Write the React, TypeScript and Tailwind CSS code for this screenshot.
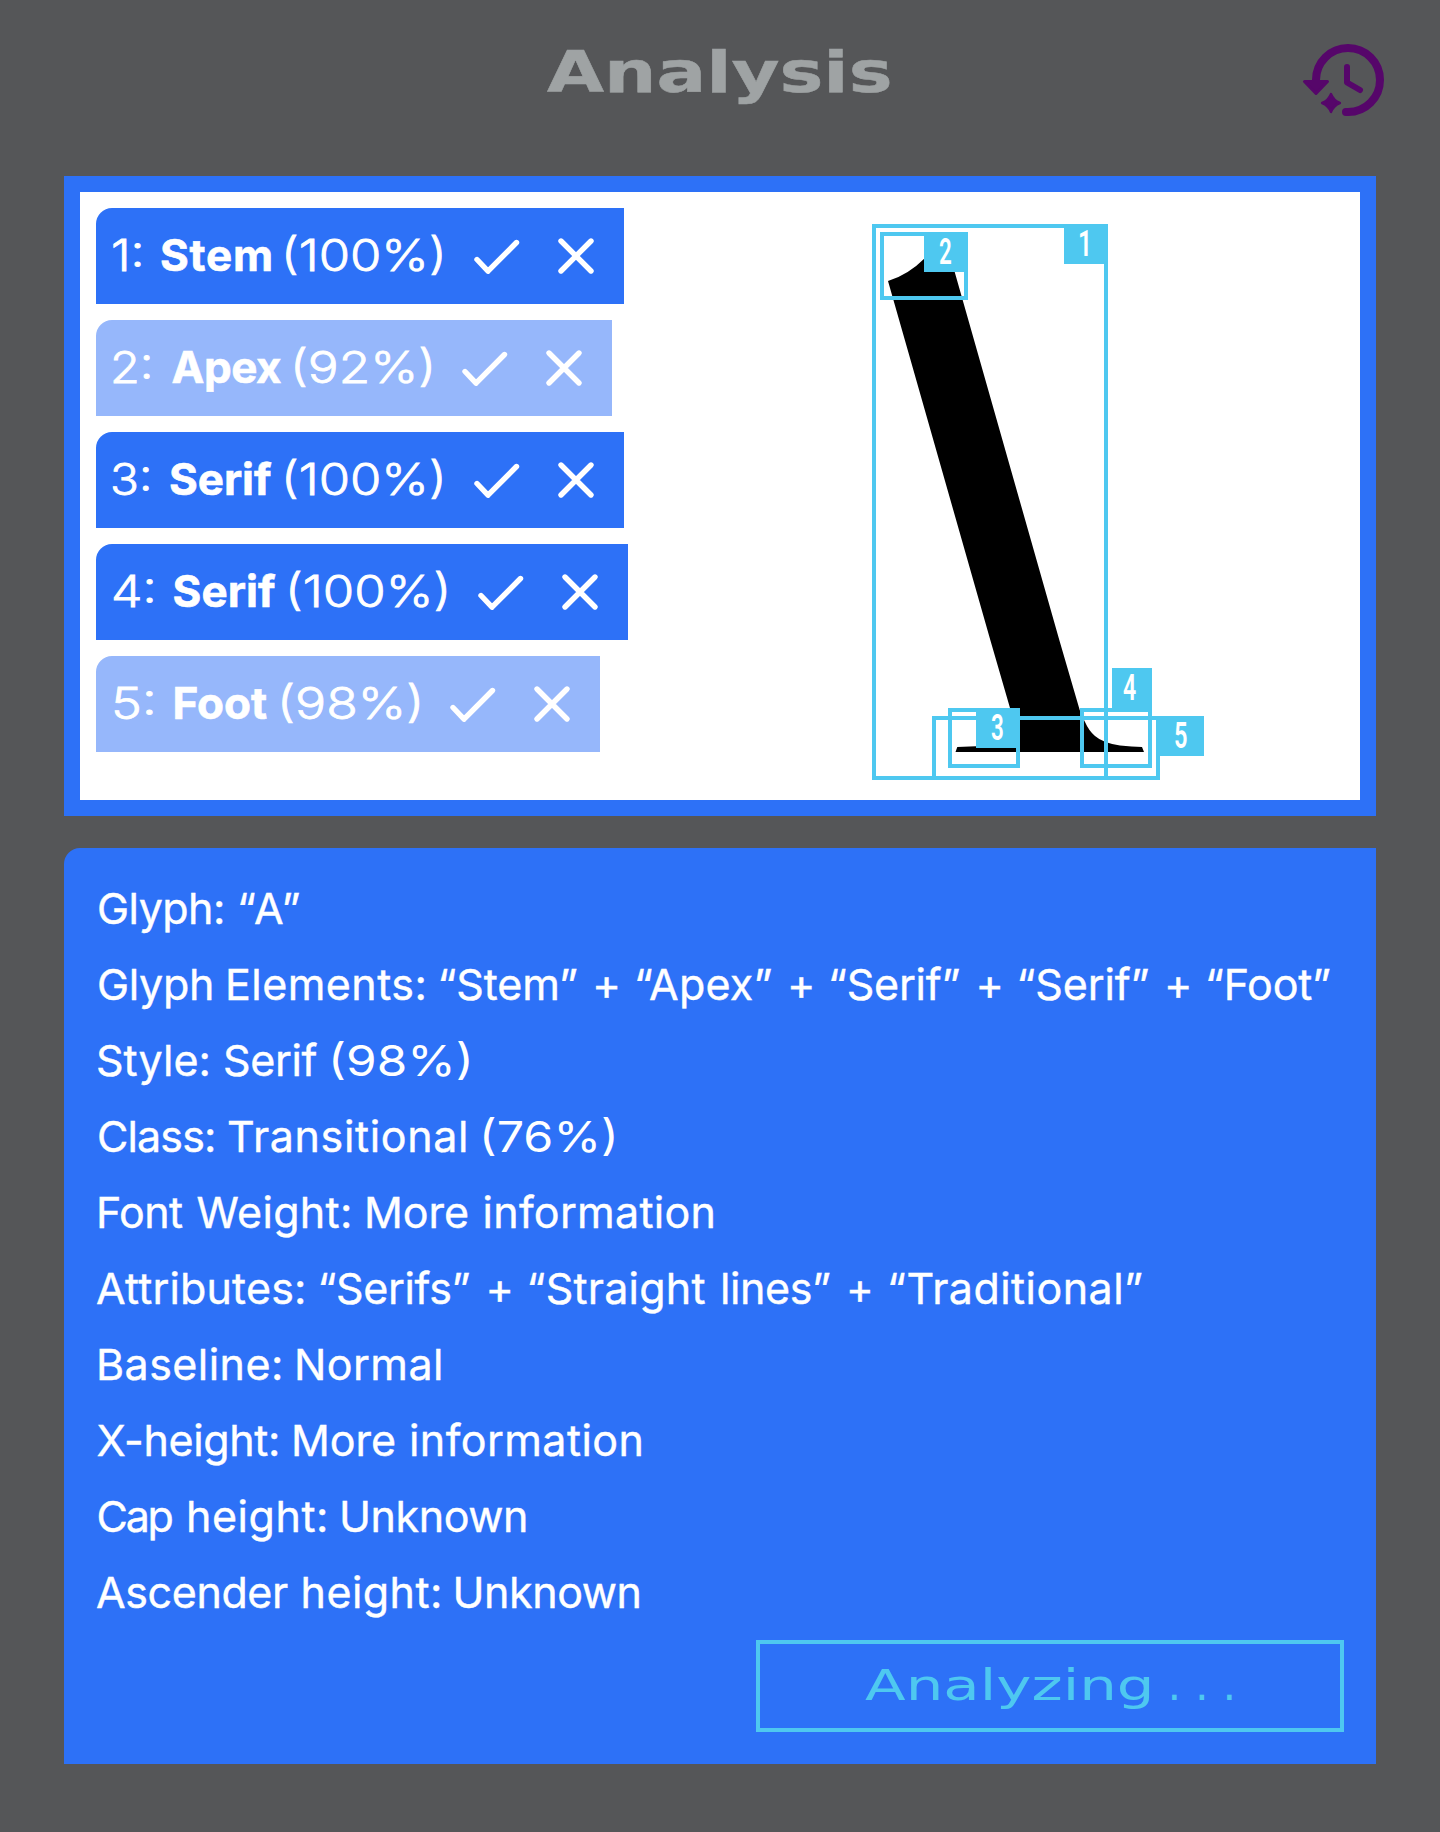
import { useLayoutEffect, useRef } from "react";

type Face = { family: string; weight: number; size: number };
type Word = [text: string, from: number, to: number];

const BODY: Face = { family: "Inter", weight: 400, size: 43 };
const LIGHT: Face = { family: "Inter", weight: 300, size: 44 };
const BOLD: Face = { family: "Inter", weight: 700, size: 44 };
const TAG: Face = { family: "Roboto", weight: 600, size: 37 };
const TITLE: Face = { family: "DejaVu Sans", weight: 700, size: 57 };
const WIDE: Face = { family: "DejaVu Sans", weight: 400, size: 43 };

/* A word whose inked width is fitted to `width`, by tracking or by stretching. */
function Fit({ text, width, face, gap = 0, stretch = false, className = "" }: { text: string; width: number; face: Face; gap?: number; stretch?: boolean; className?: string }) {
  const ref = useRef<HTMLSpanElement>(null);
  useLayoutEffect(() => {
    const el = ref.current;
    const ctx = document.createElement("canvas").getContext("2d");
    if (!el || !ctx) return;
    ctx.font = `${face.weight} ${face.size}px "${face.family}"`;
    const m = ctx.measureText(text);
    const ink = m.actualBoundingBoxLeft + m.actualBoundingBoxRight;
    if (stretch) {
      const s = width / ink;
      el.style.transform = `scaleX(${s})`;
      el.style.marginLeft = `${m.actualBoundingBoxLeft * s}px`;
    } else {
      el.style.letterSpacing = `${(width - ink) / Math.max(1, text.length - 1)}px`;
      el.style.marginLeft = `${m.actualBoundingBoxLeft}px`;
    }
  }, [text, width, face, stretch]);
  return (
    <span className={`block shrink-0 whitespace-nowrap text-left ${className}`} style={{ width, marginLeft: gap }}>
      <span
        ref={ref}
        className="inline-block origin-left"
        style={{ fontFamily: `"${face.family}", sans-serif`, fontWeight: face.weight, fontSize: face.size }}
      >
        {text}
      </span>
    </span>
  );
}

const lines: Word[][] = [
  [["Glyph:", 99, 223], ["“A”", 240, 299.5]],
  [["Glyph", 99, 212], ["Elements:", 228, 424.5], ["“Stem”", 440.5, 577], ["+", 596.5, 618], ["“Apex”", 637, 771.5], ["+", 791, 812], ["“Serif”", 831, 959.5], ["+", 979.5, 1000.5], ["“Serif”", 1019.5, 1148.5], ["+", 1168, 1189], ["“Foot”", 1208, 1330]],
  [["Style:", 98, 208.5], ["Serif", 225, 317.5], ["(98%)", 333, 470]],
  [["Class:", 99, 214], ["Transitional", 229, 466], ["(76%)", 483, 614]],
  [["Font", 99, 183], ["Weight:", 197.5, 350], ["More", 367, 467], ["information", 484.5, 713.5]],
  [["Attributes:", 97, 304], ["“Serifs”", 320.5, 469.5], ["+", 489.5, 510.5], ["“Straight", 529.5, 705.5], ["lines”", 723, 830], ["+", 850, 870.5], ["“Traditional”", 890, 1142]],
  [["Baseline:", 99, 281], ["Normal", 297, 441]],
  [["X-height:", 97.5, 278], ["More", 294, 394], ["information", 411, 641.5]],
  [["Cap", 98.5, 172.5], ["height:", 189, 326], ["Unknown", 342, 526]],
  [["Ascender", 97, 288], ["height:", 303.5, 440], ["Unknown", 455.5, 639.5]],
];

const rows = [
  { n: ["1:", 113.5, 141], name: ["Stem", 161, 271], pct: ["(100%)", 286, 442], right: 624, solid: true },
  { n: ["2:", 113.5, 150], name: ["Apex", 172.5, 281], pct: ["(92%)", 295, 431.5], right: 612, solid: false },
  { n: ["3:", 112.5, 149], name: ["Serif", 170, 272], pct: ["(100%)", 286, 442], right: 624, solid: true },
  { n: ["4:", 113.5, 153], name: ["Serif", 173.5, 276], pct: ["(100%)", 289.5, 446], right: 628, solid: true },
  { n: ["5:", 115, 153], name: ["Foot", 174.5, 267], pct: ["(98%)", 282, 419.5], right: 600, solid: false },
] as { n: Word; name: Word; pct: Word; right: number; solid: boolean }[];

function TextLine({ words }: { words: Word[] }) {
  return (
    <div className="flex h-[76px] items-baseline leading-[76px]">
      {words.map(([t, a, b], i) => {
        const figures = t.includes("%");
        return (
          <Fit
            key={i}
            text={t}
            width={b - a}
            face={BODY}
            gap={a - (i ? words[i - 1][2] : 96)}
            stretch={figures || t === "+"}
            className={figures ? "" : "[-webkit-text-stroke:0.4px]"}
          />
        );
      })}
    </div>
  );
}

function ElementRow({ row }: { row: (typeof rows)[number] }) {
  const { n, name, pct, right, solid } = row;
  return (
    <div
      className={`flex h-24 items-baseline rounded-tl-2xl leading-[94px] text-white ${solid ? "bg-[#2d71f7]" : "bg-[#96b7fb]"}`}
      style={{ width: right - 96 }}
    >
      <Fit text={n[0]} width={n[2] - n[1]} face={LIGHT} gap={n[1] - 96} stretch className="[-webkit-text-stroke:0.8px]" />
      <Fit text={name[0]} width={name[2] - name[1]} face={BOLD} gap={name[1] - n[2]} className="[-webkit-text-stroke:0.6px]" />
      <Fit text={pct[0]} width={pct[2] - pct[1]} face={LIGHT} gap={pct[1] - name[2]} stretch className="[-webkit-text-stroke:0.8px]" />
      <svg className="ml-auto mr-7 h-24 w-[124px] shrink-0 self-start" viewBox="0 0 124 96" fill="none" stroke="white" strokeWidth="5.4" strokeLinecap="round" strokeLinejoin="round">
        <path d="M5 51.5L16 63.2L44.5 34.5" />
        <path d="M89 33L119 63M119 33L89 63" />
      </svg>
    </div>
  );
}

function Tag({ text, width, className }: { text: string; width: number; className: string }) {
  return (
    <div className={`absolute flex h-10 items-baseline justify-center bg-[#4ec8f0] leading-[40px] text-white ${className}`}>
      <Fit text={text} width={width} face={TAG} stretch />
    </div>
  );
}

function GlyphCanvas() {
  return (
    <div className="relative h-[556px] w-[332px]">
      <svg className="absolute inset-0" width="332" height="556" viewBox="872 224 332 556">
        <path d="M888 281Q908 275 925 258L941 236L945 237L954.7 272L1059.3 640L1079.7 710Q1082 717 1085 722Q1089 731 1095 736Q1103 743 1120 745.5Q1132 746.6 1142 747L1144 752H955.5L957.3 747L976 746.2Q1008 744 1013 733Q1015 726 1010 708L990.3 640L907.7 350Z" fill="black" />
      </svg>
      <div className="absolute left-0 top-0 h-[556px] w-[236px] border-4 border-[#4ec8f0]" />
      <div className="absolute left-2 top-2 h-[68px] w-[88px] border-4 border-[#4ec8f0]" />
      <div className="absolute left-[76px] top-[484px] h-[60px] w-[72px] border-4 border-[#4ec8f0]" />
      <div className="absolute left-[208px] top-[484px] h-[60px] w-[72px] border-4 border-[#4ec8f0]" />
      <div className="absolute left-[60px] top-[492px] h-[64px] w-[228px] border-4 border-[#4ec8f0]" />
      <Tag text="1" width={8} className="left-48 top-0 w-11 pr-1" />
      <Tag text="2" width={11.5} className="left-[52px] top-2 w-11 pr-px" />
      <Tag text="3" width={11.5} className="left-[104px] top-[484px] w-11 pr-px" />
      <Tag text="4" width={12.5} className="left-60 top-[444px] w-10 pr-[5px]" />
      <Tag text="5" width={11.5} className="left-[284px] top-[492px] w-12 pl-[3px]" />
    </div>
  );
}

function HistoryIcon() {
  return (
    <svg className="h-[84px] w-[84px]" viewBox="1300 40 84 84" fill="none" stroke="#56066a" strokeLinecap="round" strokeLinejoin="round">
      <path d="M1316 84V80A32 32 0 1 1 1348 112H1346" strokeWidth="8" />
      <path d="M1304.5 81.5H1327.5L1316 93.5Z" fill="#56066a" strokeWidth="3" />
      <path d="M1347 67V82.5L1360 90" strokeWidth="6" />
      <path d="M1331 94.2Q1333.5 100.5 1339.8 103Q1333.5 105.5 1331 111.8Q1328.5 105.5 1322.2 103Q1328.5 100.5 1331 94.2Z" fill="#56066a" strokeWidth="2.6" />
    </svg>
  );
}

export default function App() {
  return (
    <main className="flex h-[1832px] w-[1440px] flex-col bg-[#555658] px-16">
      <header className="relative flex h-44 items-start justify-center text-[#9fa3a4]">
        <h1 className="flex pt-[34px] leading-[76px]">
          <Fit text="Analysis" width={343} face={TITLE} gap={-3} stretch className="[-webkit-text-stroke:0.5px]" />
        </h1>
        <div className="absolute right-[-8px] top-10">
          <HistoryIcon />
        </div>
      </header>
      <section className="flex h-[640px] justify-between border-16 border-[#2d71f7] bg-white pl-4 pr-[156px]">
        <div className="flex flex-col gap-4 pt-4">
          {rows.map((row, i) => (
            <ElementRow key={i} row={row} />
          ))}
        </div>
        <div className="pt-8">
          <GlyphCanvas />
        </div>
      </section>
      <section className="mt-8 flex h-[916px] flex-col rounded-tl-2xl bg-[#2d71f7] px-8 pt-[22px] text-white">
        {lines.map((words, i) => (
          <TextLine key={i} words={words} />
        ))}
        <button className="mt-[10px] flex h-[92px] w-[588px] self-end border-4 border-[#4ec8f0] leading-[82px] text-[#4ec8f0]">
          <Fit text="Analyzing" width={285} face={WIDE} gap={104.5} stretch />
          <Fit text=". . ." width={61} face={WIDE} gap={22} />
        </button>
      </section>
    </main>
  );
}
